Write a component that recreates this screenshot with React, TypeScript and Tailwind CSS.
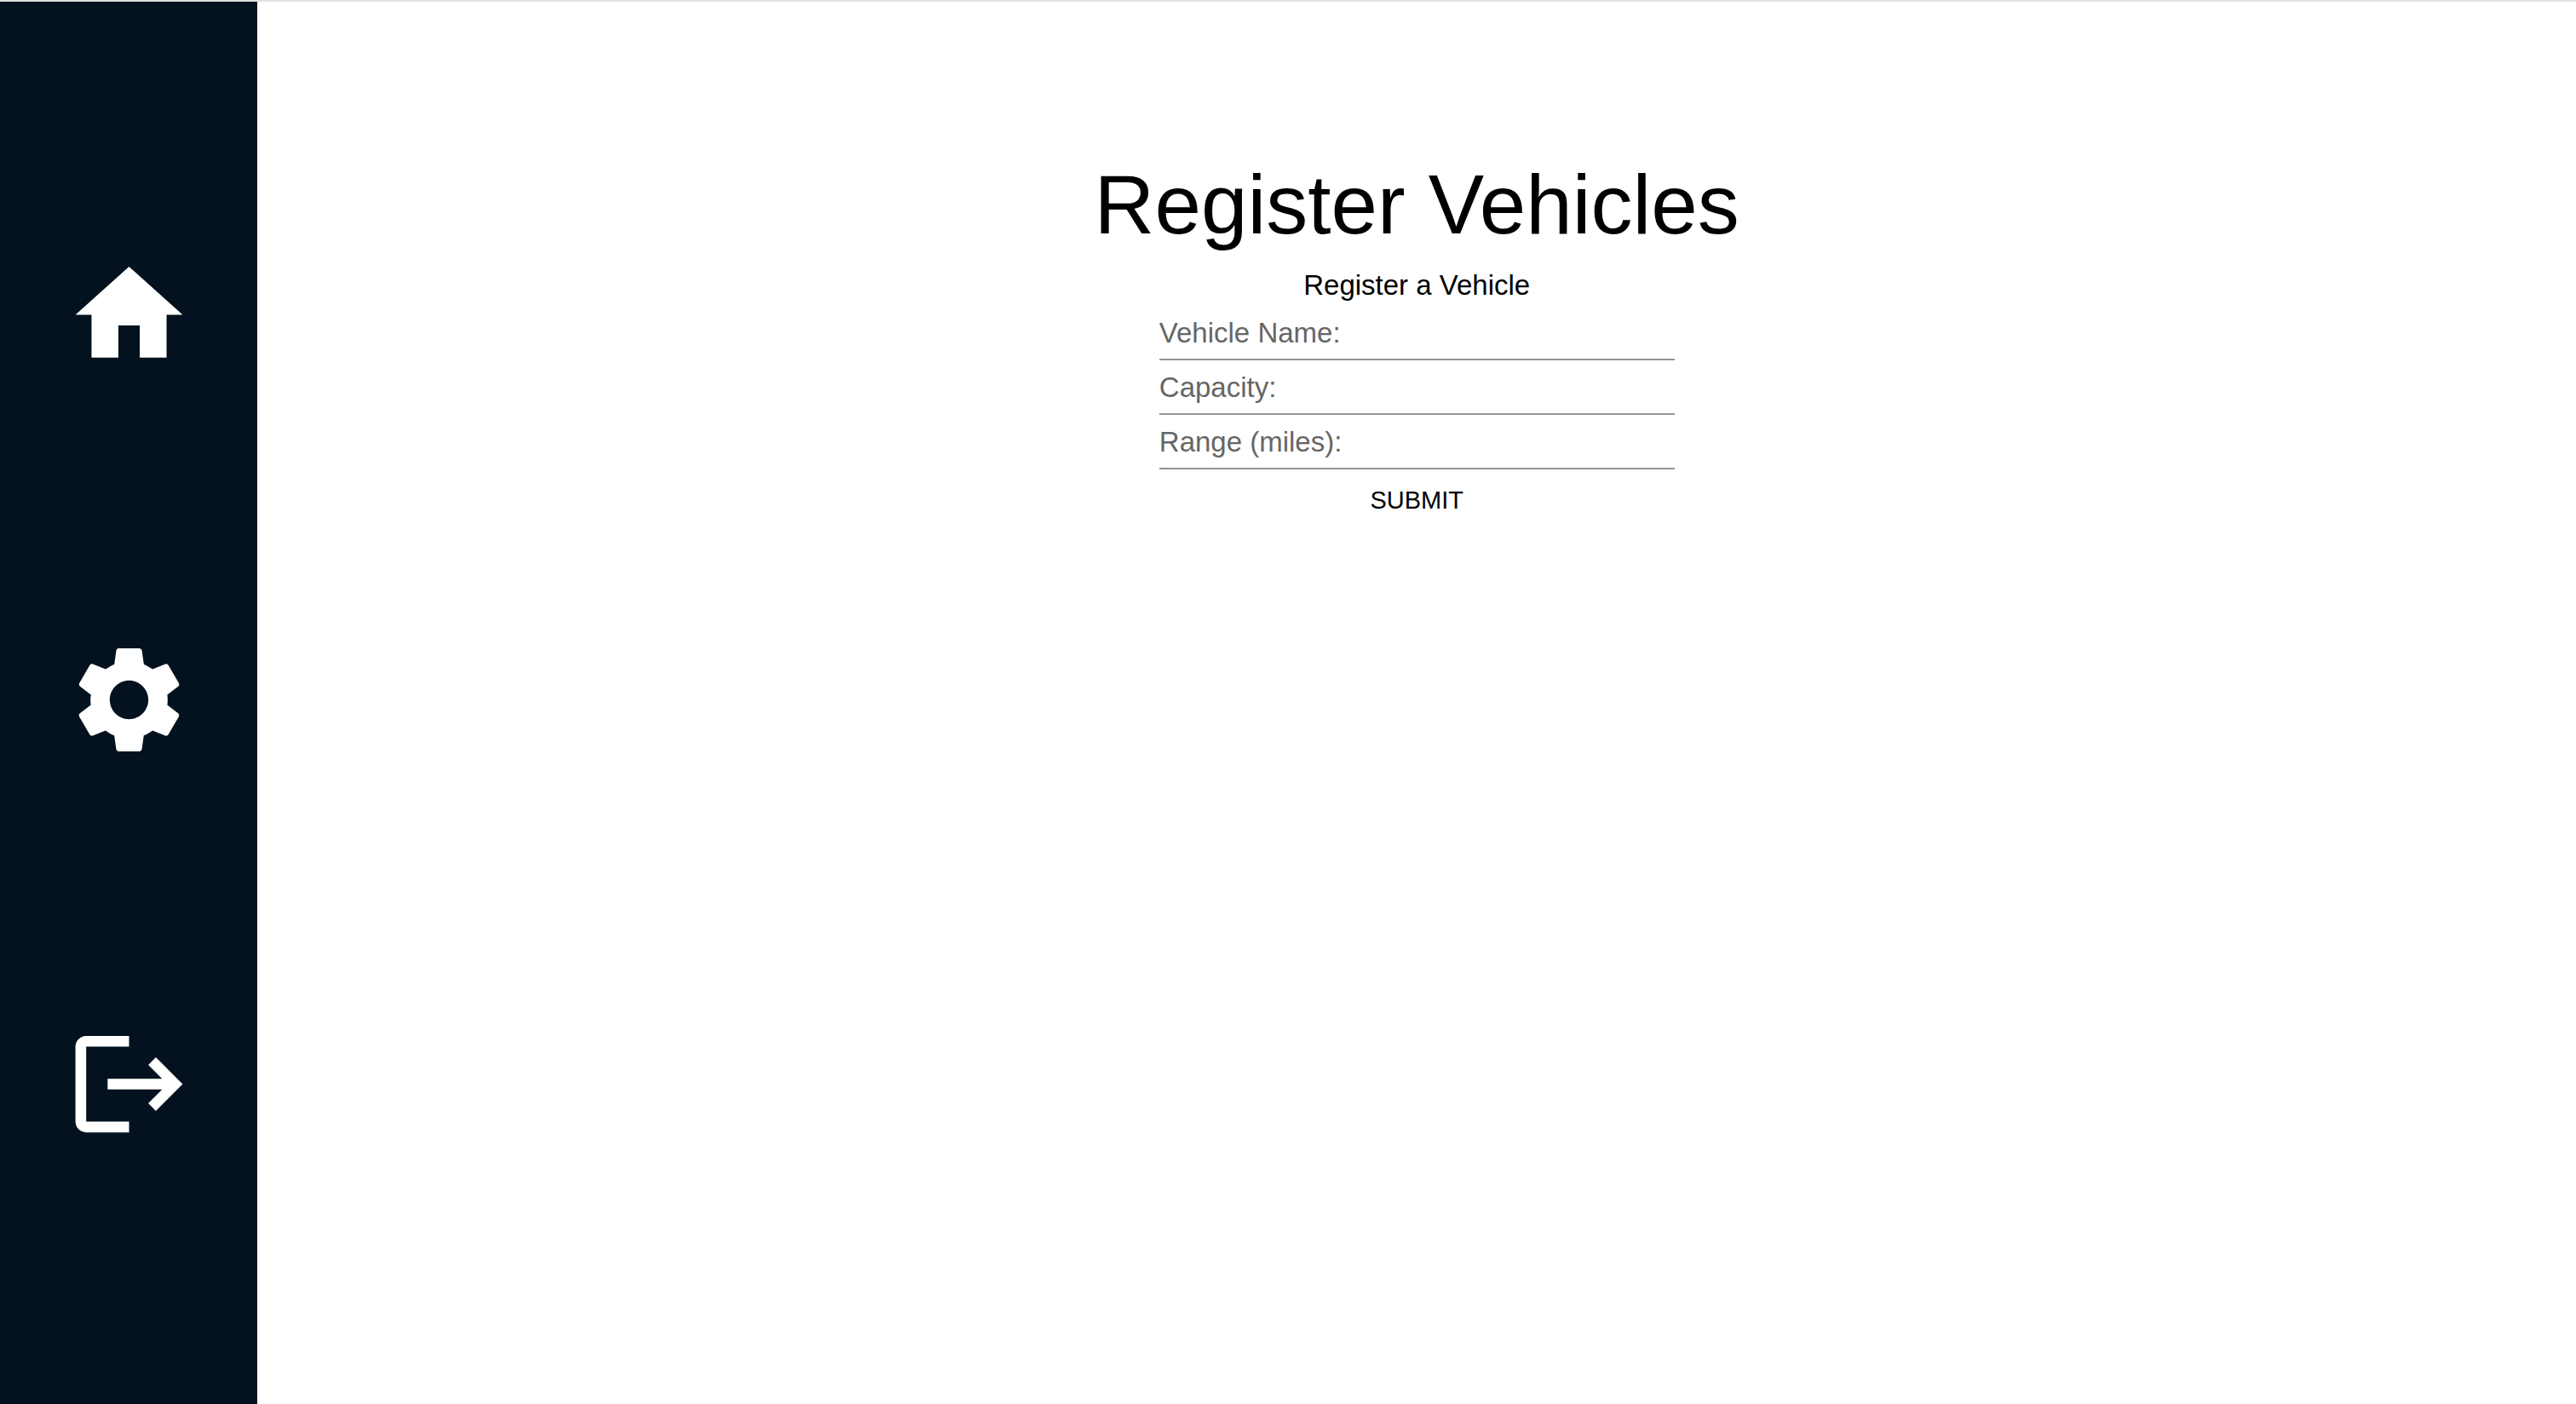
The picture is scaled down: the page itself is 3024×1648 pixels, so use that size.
import React from "react";
import { MdHome, MdSettings, MdLogout } from "react-icons/md";

const links = [
  { label: "Home", href: "#home", Icon: MdHome },
  { label: "Settings", href: "#settings", Icon: MdSettings },
  { label: "Log out", href: "#logout", Icon: MdLogout },
];

const fields = [
  { id: "vehicle-name", label: "Vehicle Name:" },
  { id: "capacity", label: "Capacity:" },
  { id: "range", label: "Range (miles):" },
];

export default function App() {
  return (
    <div className="flex min-h-screen flex-col border-t-2 border-[#e0e0e0] bg-white font-['Liberation_Sans',Arial,sans-serif] text-black">
      <div className="flex grow">
        <nav className="flex w-1/10 shrink-0 flex-col items-center justify-evenly bg-[#03121e] text-white">
          {links.map(({ label, href, Icon }) => (
            <a key={href} href={href} aria-label={label} className="pb-2">
              <Icon className="size-[151px]" />
            </a>
          ))}
        </nav>
        <main className="flex grow flex-col items-center pt-[180px]">
          <h1 className="text-[98px] leading-[116px]">Register Vehicles</h1>
          <form className="flex w-2/9 flex-col items-center">
            <h2 className="mt-3 text-[33px] leading-[49px]">Register a Vehicle</h2>
            {fields.map(({ id, label }) => (
              <div key={id} className="flex h-16 w-full items-center border-b-2 border-[#949494]">
                <label htmlFor={id} className="shrink-0 text-[33px] leading-[49px] text-[#666666]">
                  {label}
                </label>
                <input id={id} className="min-w-0 grow text-[33px] outline-none" />
              </div>
            ))}
            <button type="submit" className="px-4 py-3 text-[29px] leading-[49px]">
              SUBMIT
            </button>
          </form>
        </main>
      </div>
    </div>
  );
}
